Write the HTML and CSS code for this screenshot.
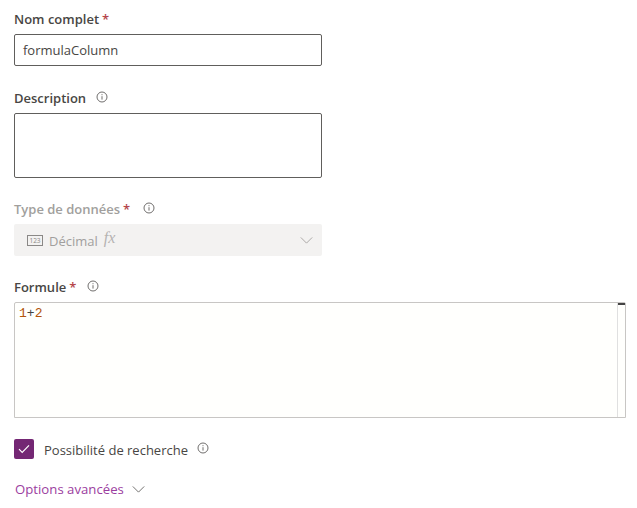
FILE: index.html
```html
<!DOCTYPE html>
<html lang="fr">
<head>
    <meta charset="UTF-8">
    <title>Nouvelle colonne</title>
    <link rel="stylesheet" href="styles.css">
</head>
<body>
    <form class="form">
        <div class="field">
            <div class="label"><span>Nom complet</span><span class="req">*</span></div>
            <div class="input">formulaColumn</div>
        </div>
        <div class="field field-desc">
            <div class="label"><span>Description</span>
                <svg class="info" viewBox="0 0 12 12"><circle cx="6" cy="6" r="5" /><path d="M6 5.2v3.4M6 3.2v1" /></svg>
            </div>
            <div class="textarea"></div>
        </div>
        <div class="field field-type">
            <div class="label label-disabled"><span>Type de données</span><span class="req">*</span>
                <svg class="info" viewBox="0 0 12 12"><circle cx="6" cy="6" r="5" /><path d="M6 5.2v3.4M6 3.2v1" /></svg>
            </div>
            <div class="select">
                <svg class="icon-123" viewBox="0 0 16 11"><rect x="0.5" y="0.5" width="15" height="10" /><text x="8" y="7.7">123</text></svg>
                <span class="select-value">Décimal</span>
                <span class="fx">fx</span>
                <svg class="chevron chevron-select" viewBox="0 0 14 8"><path d="M0.5 0.5L7 7L13.5 0.5" /></svg>
            </div>
        </div>
        <div class="field field-formula">
            <div class="label"><span>Formule</span><span class="req">*</span>
                <svg class="info" viewBox="0 0 12 12"><circle cx="6" cy="6" r="5" /><path d="M6 5.2v3.4M6 3.2v1" /></svg>
            </div>
            <div class="editor">
                <div class="code"><span class="num">1</span><span class="op">+</span><span class="num">2</span></div>
                <div class="ruler"><div class="ruler-mark"></div></div>
            </div>
        </div>
        <div class="check-row">
            <div class="checkbox">
                <svg viewBox="0 0 12 10"><path d="M1 5.2L4.2 8.4L11 1.4" /></svg>
            </div>
            <span class="check-text">Possibilité de recherche</span>
            <svg class="info" viewBox="0 0 12 12"><circle cx="6" cy="6" r="5" /><path d="M6 5.2v3.4M6 3.2v1" /></svg>
        </div>
        <div class="advanced">
            <span>Options avancées</span>
            <svg class="chevron" viewBox="0 0 14 8"><path d="M0.5 0.5L7 7L13.5 0.5" /></svg>
        </div>
    </form>
</body>
</html>
```

FILE: styles.css
```css
body {
    margin: 0;
    background: #fff;
    color: #484644;
    font-family: "Open Sans", Arial, sans-serif;
    font-size: 13px;
    overflow: hidden;
}
.form {
    display: flex;
    flex-direction: column;
    padding: 10px 11px 0 14px;
}
.field-desc {
    margin-top: 23px;
}
.field-type {
    margin-top: 22px;
}
.field-formula {
    margin-top: 22px;
}
.label {
    display: flex;
    align-items: center;
    height: 18px;
    margin-bottom: 6px;
    font-weight: 600;
    font-size: 13px;
}
.label-disabled {
    color: #a19f9d;
}
.req {
    margin-left: 3px;
    color: #b5454a;
}
.info {
    width: 12px;
    height: 12px;
    margin-left: 10px;
    margin-top: -2px;
    fill: none;
    stroke: #605e5c;
    stroke-width: 0.9;
}
.req + .info {
    margin-left: 11px;
}
.label-disabled .req + .info {
    margin-left: 13px;
}
.input, .textarea {
    box-sizing: border-box;
    width: 308px;
    border: 1px solid #605e5c;
    border-radius: 2px;
}
.input {
    height: 32px;
    line-height: 30px;
    padding-left: 8px;
}
.textarea {
    height: 65px;
}
.select {
    display: flex;
    align-items: center;
    box-sizing: border-box;
    width: 308px;
    height: 32px;
    padding: 0 9px 0 13px;
    background: #f3f2f1;
    border-radius: 2px;
    color: #a19f9d;
}
.select-value {
    padding-top: 2px;
}
.icon-123 {
    width: 16px;
    height: 11px;
    margin-right: 6px;
}
.icon-123 rect {
    fill: none;
    stroke: #8a8886;
}
.icon-123 text {
    font-size: 6.5px;
    text-anchor: middle;
    fill: #8a8886;
}
.fx {
    margin: -4px 0 0 6px;
    font-family: "Liberation Serif", serif;
    font-style: italic;
    font-size: 16px;
    color: #b5b3b1;
}
.chevron {
    width: 13px;
    height: 7px;
    fill: none;
    stroke: #605e5c;
    stroke-width: 1;
}
.chevron-select {
    margin-left: auto;
    stroke: #a19f9d;
}
.editor {
    box-sizing: border-box;
    display: flex;
    justify-content: space-between;
    height: 116px;
    background: #fffffd;
    border: 1px solid #c8c6c4;
    border-radius: 2px 2px 0 0;
}
.code {
    padding: 3px 0 0 4px;
    font-family: "Liberation Mono", monospace;
    font-size: 13px;
    line-height: 15px;
}
.num {
    color: #b3540a;
}
.op {
    color: #444;
}
.ruler {
    width: 7px;
    border-left: 1px solid #e0e0e0;
}
.ruler-mark {
    height: 2px;
    background: #444;
}
.check-row {
    display: flex;
    align-items: center;
    gap: 10px;
    margin-top: 21px;
    height: 20px;
}
.check-text {
    padding-top: 2px;
}
.checkbox {
    display: flex;
    align-items: center;
    justify-content: center;
    width: 20px;
    height: 20px;
    background: #742774;
    border-radius: 2px;
}
.checkbox svg {
    width: 12px;
    height: 10px;
    fill: none;
    stroke: #fff;
    stroke-width: 1.2;
}
.check-row .info {
    margin-left: -1px;
}
.advanced {
    display: flex;
    align-items: center;
    gap: 8px;
    margin: 20px 0 0 1px;
    height: 20px;
    font-size: 13.2px;
    color: #9b3da0;
}
```
